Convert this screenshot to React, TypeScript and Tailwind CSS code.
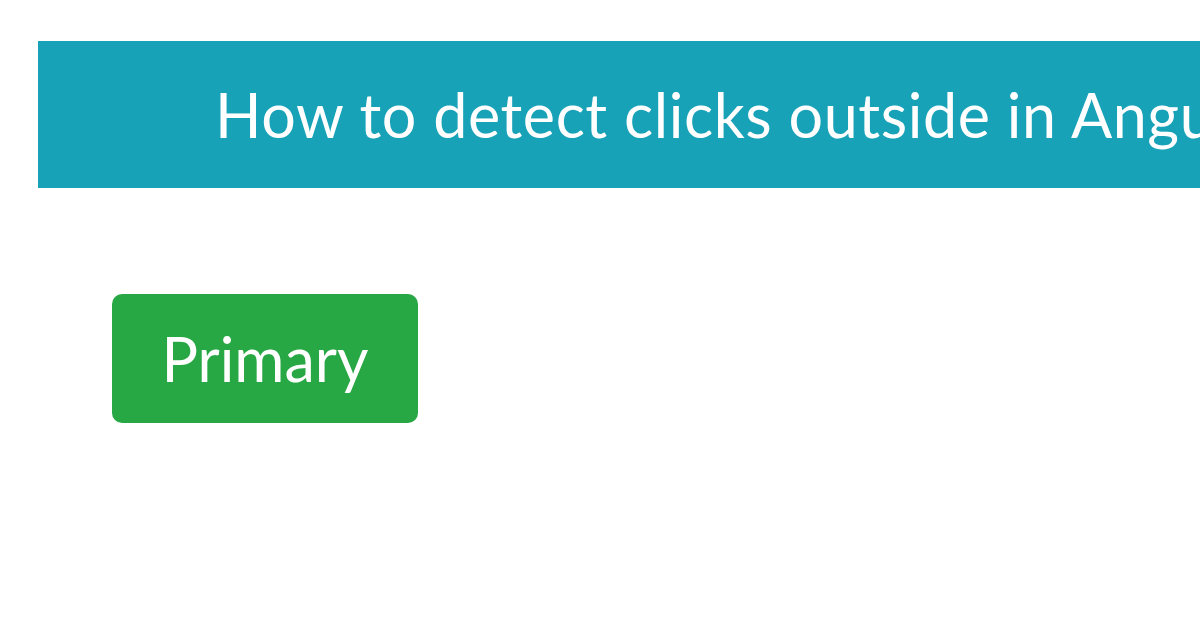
export default function App() {
  return (
    <div className="w-[1200px] h-[628px] bg-white overflow-hidden" style={{ fontFamily: "Lato, 'Open Sans', sans-serif" }}>
      <div className="pt-[41px] pl-[38px]">
        <div className="h-[147px] bg-[#17a2b8] flex items-center pl-[177px] overflow-hidden whitespace-nowrap">
          <h1 className="text-white text-[61px] tracking-[0.6px] leading-none font-normal">How to detect clicks outside in Angular</h1>
        </div>
      </div>
      <div className="pt-[106px] pl-[112px]">
        <button className="w-[306px] h-[129px] bg-[#28a745] rounded-[10px] text-white text-[61px] leading-none flex items-center justify-center">
          Primary
        </button>
      </div>
    </div>
  );
}
